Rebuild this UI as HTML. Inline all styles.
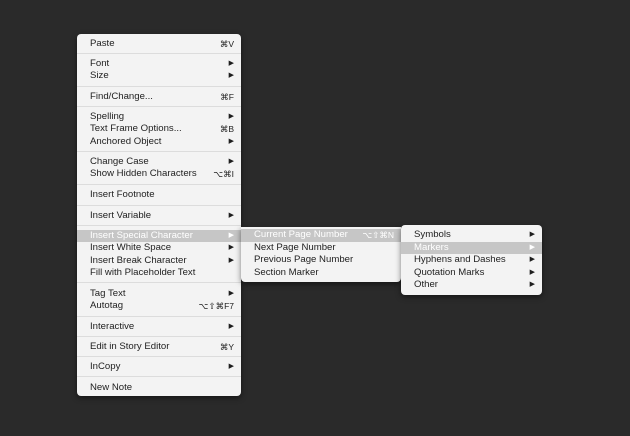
<!DOCTYPE html>
<html><head><meta charset="utf-8"><style>
*{margin:0;padding:0;box-sizing:border-box}
body{width:630px;height:436px;background:#2a2a2a;position:relative;overflow:hidden;font-family:"Liberation Sans","DejaVu Sans",sans-serif;font-size:9.6px;color:#1e1e1e}
.m{position:absolute;background:#f3f3f3;border-radius:4px;box-shadow:0 2px 6px rgba(0,0,0,.5)}
.r{position:absolute;left:0;right:0;height:12.5px;line-height:12.5px;padding-left:13px}
.r .k{position:absolute;right:7px;top:0;font-size:8.5px}
.r .a{position:absolute;right:7px;top:0;font-size:7px}
.h{background:#c6c6c6;color:#fff}
.s{position:absolute;left:0;right:0;height:1px;background:#dcdcdc}
.m1 .r{margin-top:1px}
</style></head><body>
<div class="m m1" style="left:77px;top:34px;width:164px;height:362px">
<div class="r" style="top:2.5px">Paste<span class="k">⌘V</span></div>
<div class="s" style="top:19px"></div>
<div class="r" style="top:22.5px">Font<span class="a">▶</span></div>
<div class="r" style="top:35px">Size<span class="a">▶</span></div>
<div class="s" style="top:52px"></div>
<div class="r" style="top:55.5px">Find/Change...<span class="k">⌘F</span></div>
<div class="s" style="top:72px"></div>
<div class="r" style="top:75.5px">Spelling<span class="a">▶</span></div>
<div class="r" style="top:88px">Text Frame Options...<span class="k">⌘B</span></div>
<div class="r" style="top:100.5px">Anchored Object<span class="a">▶</span></div>
<div class="s" style="top:117px"></div>
<div class="r" style="top:120.5px">Change Case<span class="a">▶</span></div>
<div class="r" style="top:133px">Show Hidden Characters<span class="k">⌥⌘I</span></div>
<div class="s" style="top:150px"></div>
<div class="r" style="top:153.5px">Insert Footnote</div>
<div class="s" style="top:171px"></div>
<div class="r" style="top:174.5px">Insert Variable<span class="a">▶</span></div>
<div class="s" style="top:191px"></div>
<div class="r h" style="top:194.5px">Insert Special Character<span class="a">▶</span></div>
<div class="r" style="top:207px">Insert White Space<span class="a">▶</span></div>
<div class="r" style="top:219.5px">Insert Break Character<span class="a">▶</span></div>
<div class="r" style="top:232px">Fill with Placeholder Text</div>
<div class="s" style="top:248px"></div>
<div class="r" style="top:252.5px">Tag Text<span class="a">▶</span></div>
<div class="r" style="top:265px">Autotag<span class="k">⌥⇧⌘F7</span></div>
<div class="s" style="top:282px"></div>
<div class="r" style="top:285.5px">Interactive<span class="a">▶</span></div>
<div class="s" style="top:302px"></div>
<div class="r" style="top:305.5px">Edit in Story Editor<span class="k">⌘Y</span></div>
<div class="s" style="top:322px"></div>
<div class="r" style="top:325.5px">InCopy<span class="a">▶</span></div>
<div class="s" style="top:342px"></div>
<div class="r" style="top:346.5px">New Note</div>
</div>
<div class="m" style="left:241px;top:227px;width:160px;height:55px;border-radius:0 0 4px 4px">
<div class="r h" style="top:2px">Current Page Number<span class="k">⌥⇧⌘N</span></div>
<div class="r" style="top:14.5px">Next Page Number</div>
<div class="r" style="top:27px">Previous Page Number</div>
<div class="r" style="top:39.5px">Section Marker</div>
</div>
<div class="m" style="left:401px;top:225px;width:141px;height:70px">
<div class="r" style="top:4px">Symbols<span class="a">▶</span></div>
<div class="r h" style="top:16.5px">Markers<span class="a">▶</span></div>
<div class="r" style="top:29px">Hyphens and Dashes<span class="a">▶</span></div>
<div class="r" style="top:41.5px">Quotation Marks<span class="a">▶</span></div>
<div class="r" style="top:54px">Other<span class="a">▶</span></div>
</div>
</body></html>
